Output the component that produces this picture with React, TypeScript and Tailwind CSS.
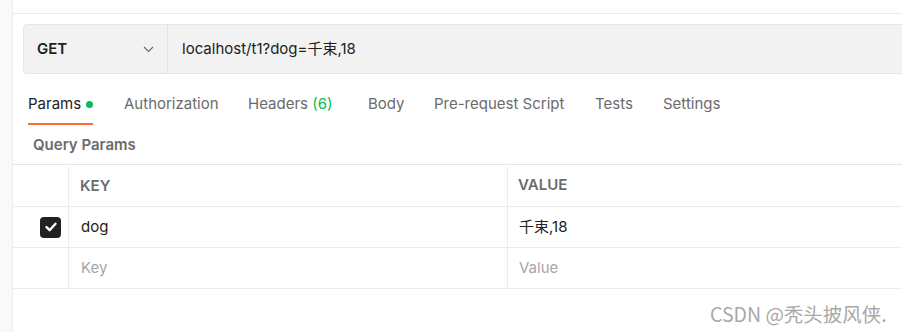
import React from "react";

const tabs: { label: string; w: string }[] = [
  { label: "Params", w: "w-[96px]" },
  { label: "Authorization", w: "w-[124px]" },
  { label: "Headers", w: "w-[120px]" },
  { label: "Body", w: "w-[66px]" },
  { label: "Pre-request Script", w: "w-[161px]" },
  { label: "Tests", w: "w-[68px]" },
  { label: "Settings", w: "w-[80px]" },
];

function Checkbox() {
  return (
    <div className="w-[21px] h-[21px] rounded-[4px] bg-[#212121] flex items-center justify-center">
      <svg width="14" height="14" viewBox="0 0 14 14" fill="none">
        <path d="M2.5 7.2 L5.6 10.2 L11.5 3.8" stroke="#fff" strokeWidth="2.4" strokeLinecap="round" strokeLinejoin="round" />
      </svg>
    </div>
  );
}

export default function App() {
  return (
    <div
      className="relative flex w-full h-[332px] overflow-hidden bg-white text-[15px] text-[#212121]"
      style={{ fontFamily: "Inter, 'Noto Sans CJK SC', sans-serif" }}
    >
      {/* left rail */}
      <div className="w-[13px] shrink-0 bg-[#f9f9f9] border-r border-[#ececec]" />

      <div className="flex-1 flex flex-col min-w-0">
        <div className="h-[14px] shrink-0 border-b border-[#ececec]" />

        {/* url bar */}
        <div className="mt-[10px] ml-[10px] -mr-[20px] h-[50px] flex bg-[#f2f2f2] border border-[#e6e6e6] rounded-[4px]">
          <div className="w-[144px] shrink-0 flex items-center justify-between pl-[13px] pr-[13px] border-r border-[#e3e3e3]">
            <span className="font-semibold text-[15px] text-[#212121]">GET</span>
            <svg width="11" height="7" viewBox="0 0 11 7" fill="none">
              <path d="M1 1 L5.5 5.5 L10 1" stroke="#6b6b6b" strokeWidth="1.2" />
            </svg>
          </div>
          <div className="flex items-center pl-[14px] text-[15px] text-[#212121]">
            localhost/t1?dog=千束,18
          </div>
        </div>

        {/* tabs */}
        <div className="flex ml-[15px] mt-[14px] h-[38px]">
          {tabs.map((t, i) => (
            <div key={t.label} className={`${t.w} shrink-0 flex flex-col`}>
              <div className="flex items-center h-[32px] text-[15px]">
                {i === 0 ? (
                  <span className="relative flex items-center text-[#212121]">
                    Params
                    <span className="ml-[5px] w-[7px] h-[7px] rounded-full bg-[#0cbb52]" />
                    <span className="absolute left-0 right-0 -bottom-[10px] h-[2px] bg-[#ff6c37]" />
                  </span>
                ) : t.label === "Headers" ? (
                  <span className="text-[#6b6b6b]">
                    Headers <span className="text-[#0cbb52]">(6)</span>
                  </span>
                ) : (
                  <span className="text-[#6b6b6b]">{t.label}</span>
                )}
              </div>
            </div>
          ))}
        </div>

        {/* query params title */}
        <div className="h-[38px] flex items-center pl-[20px] font-semibold text-[15px] text-[#6b6b6b]">
          Query Params
        </div>

        {/* table */}
        <div className="border-t border-[#e6e6e6]">
          <div className="flex h-[42px] border-b border-[#ececec]">
            <div className="w-[56px] shrink-0 border-r border-[#ececec] mt-[2px]" />
            <div className="w-[439px] shrink-0 border-r border-[#ececec] mt-[2px] flex items-center pl-[11px] font-semibold text-[#6b6b6b]">
              KEY
            </div>
            <div className="flex-1 flex items-center pl-[10px] font-semibold text-[#6b6b6b]">VALUE</div>
          </div>
          <div className="flex h-[41px] border-b border-[#ececec]">
            <div className="w-[56px] shrink-0 border-r border-[#ececec] flex items-center justify-end pr-[7px]">
              <Checkbox />
            </div>
            <div className="w-[439px] shrink-0 border-r border-[#ececec] flex items-center pl-[12px]">dog</div>
            <div className="flex-1 flex items-center pl-[11px]">千束,18</div>
          </div>
          <div className="flex h-[41px] border-b border-[#ececec]">
            <div className="w-[56px] shrink-0 border-r border-[#ececec]" />
            <div className="w-[439px] shrink-0 border-r border-[#ececec] flex items-center pl-[12px] text-[#a6a6a6]">
              Key
            </div>
            <div className="flex-1 flex items-center pl-[11px] text-[#a6a6a6]">Value</div>
          </div>
        </div>
      </div>

      {/* watermark */}
      <div
        className="absolute left-[710px] top-[299px] text-[19.5px] text-[#a8a8a8] whitespace-nowrap"
        style={{ fontFamily: "'Noto Sans CJK SC', sans-serif" }}
      >
        CSDN @秃头披风侠.
      </div>
    </div>
  );
}
